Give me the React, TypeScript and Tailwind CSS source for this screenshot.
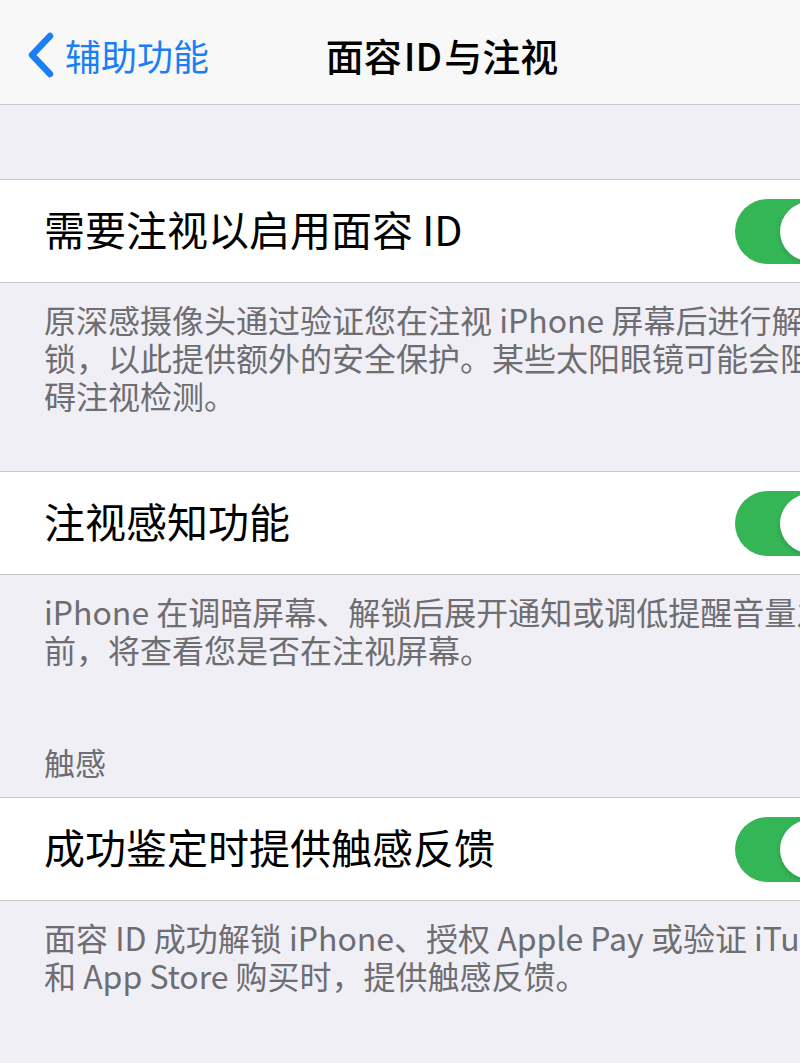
import React from "react";

function Toggle() {
  return (
    <div className="w-[107px] h-[65px] rounded-full bg-[#34b556] flex items-center justify-end pr-[3px] shrink-0">
      <div className="w-[59px] h-[59px] rounded-full bg-white shadow-[0_2px_4px_rgba(0,0,0,0.15)]" />
    </div>
  );
}

function Row({ title }: { title: string }) {
  return (
    <div className="h-[104px] bg-white border-y border-[#c8c7cc] flex items-center justify-between pl-[44px] pr-[42px]">
      <span className="text-[41px] leading-none text-black whitespace-nowrap pb-[5px]">{title}</span>
      <Toggle />
    </div>
  );
}

function Desc({ lines, className }: { lines: string[]; className: string }) {
  return (
    <div className={"pl-[44px] text-[32px] leading-[38px] text-[#6d6d72] " + className}>
      {lines.map((l, i) => (
        <div key={i} className="whitespace-nowrap">
          {l}
        </div>
      ))}
    </div>
  );
}

export default function App() {
  return (
    <div className="w-[800px] h-[1063px] overflow-hidden bg-[#f0eff5] font-['Noto_Sans_CJK_SC','Noto_Sans',sans-serif]">
      <div className="w-[884px]">
        <header className="h-[105px] bg-[#f8f8f8] border-b border-[#c8c7cc] grid grid-cols-[1fr_auto_1fr] items-center pt-[6px]">
          <div className="flex items-center pl-[26px] gap-[9px] text-[#1a7ef5]">
            <svg width="30" height="46" viewBox="0 0 30 46" fill="none">
              <path d="M24 4 L6 23 L24 42" stroke="#1a7ef5" strokeWidth="6.5" strokeLinecap="round" strokeLinejoin="round" />
            </svg>
            <span className="text-[36px] leading-none whitespace-nowrap">辅助功能</span>
          </div>
          <div className="text-[38px] leading-none font-medium text-black whitespace-nowrap">
            面容<span className="ml-[2px] mr-[2px]">ID</span>与注视
          </div>
          <div />
        </header>
        <div className="h-[74px]" />
        <Row title="需要注视以启用面容 ID" />
        <Desc
          className="pt-[17px] pb-[57px]"
          lines={[
            "原深感摄像头通过验证您在注视 iPhone 屏幕后进行解",
            "锁，以此提供额外的安全保护。某些太阳眼镜可能会阻",
            "碍注视检测。",
          ]}
        />
        <Row title="注视感知功能" />
        <Desc
          className="pt-[17px] pb-[75px]"
          lines={["iPhone 在调暗屏幕、解锁后展开通知或调低提醒音量之", "前，将查看您是否在注视屏幕。"]}
        />
        <div className="pl-[44px] pb-[16px] text-[31px] leading-[38px] text-[#6d6d72]">触感</div>
        <Row title="成功鉴定时提供触感反馈" />
        <Desc
          className="pt-[17px]"
          lines={["面容 ID 成功解锁 iPhone、授权 Apple Pay 或验证 iTunes", "和 App Store 购买时，提供触感反馈。"]}
        />
      </div>
    </div>
  );
}
